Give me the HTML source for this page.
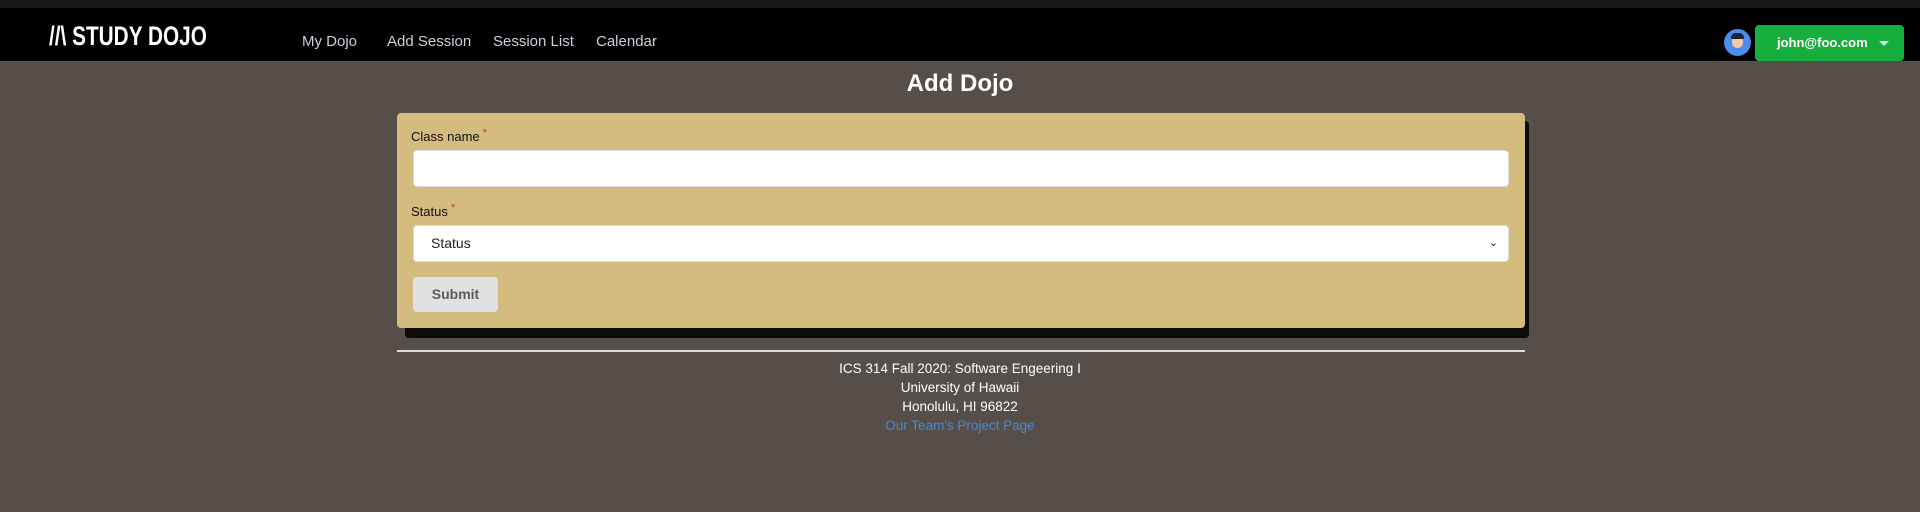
<!DOCTYPE html>
<html><head><meta charset="utf-8"><style>
*{margin:0;padding:0;box-sizing:border-box}
body{width:1920px;height:512px;background:#554e49;font-family:"Liberation Sans",sans-serif;position:relative;overflow:hidden}
.top{position:absolute;left:0;top:0;width:1920px;height:8px;background:#17171b}
.nav{position:absolute;left:0;top:8px;width:1920px;height:53px;background:#000}
.logo{position:absolute;left:49px;top:13px;color:#fff;font:bold 27px "Liberation Sans Narrow","Liberation Sans",sans-serif;letter-spacing:0px;transform:scaleX(.77);transform-origin:left;white-space:nowrap}
.ni{position:absolute;top:25px;color:#c9d1dc;font-size:15px}
.av{position:absolute;left:1724px;top:21px;width:27px;height:27px;border-radius:50%;background:#4a8cf0;overflow:hidden}
.av .f{position:absolute;left:8px;top:7px;width:11px;height:12px;border-radius:45%;background:#f4c9a8}
.av .h{position:absolute;left:7px;top:4px;width:13px;height:6px;border-radius:6px 6px 2px 2px;background:#1c2333}
.btn{position:absolute;left:1755px;top:17px;width:149px;height:36px;background:#16ae3c;border-radius:4px;color:#fff;font-weight:bold;font-size:13px;line-height:36px;padding-left:22px}
.btn:after{content:"";position:absolute;left:124px;top:16px;border:5px solid transparent;border-top-color:#d8f0dc;border-bottom:0}
h1{position:absolute;left:0;width:1920px;top:70px;text-align:center;color:#fff;font-size:24px}
.sh{position:absolute;left:405px;top:121px;width:1124px;height:217px;background:#0d0b09;border-radius:4px}
.card{position:absolute;left:397px;top:113px;width:1128px;height:215px;background:#d4bb7e;border-radius:4px}
.lb{position:absolute;left:14px;font-size:13px;color:#111}
.lb b{color:#d33;font-weight:normal;font-size:11px;position:relative;top:-5px;margin-left:3px}
.in{position:absolute;left:16px;width:1096px;height:37px;background:#fff;border:1px solid #ddd;border-radius:4px;font-size:14px;line-height:35px;padding-left:17px;color:#222}
.sub{position:absolute;left:16px;top:164px;width:85px;height:35px;background:#e0e1e2;border-radius:4px;color:#5a5a5a;font-weight:bold;font-size:14px;text-align:center;line-height:35px}
hr{position:absolute;left:397px;top:350px;width:1128px;border:0;border-top:2px solid #ddd}
.ft{position:absolute;left:0;width:1920px;text-align:center;color:#fff;font-size:13.5px}
</style></head><body>
<div class="top"></div>
<div class="nav">
<div class="logo">//\ STUDY DOJO</div>
<div class="ni" style="left:302px">My Dojo</div>
<div class="ni" style="left:387px">Add Session</div>
<div class="ni" style="left:493px">Session List</div>
<div class="ni" style="left:596px">Calendar</div>
<div class="av"><div class="f"></div><div class="h"></div></div>
<div class="btn">john@foo.com</div>
</div>
<h1>Add Dojo</h1>
<div class="sh"></div>
<div class="card">
<div class="lb" style="top:16px">Class name<b>*</b></div>
<div class="in" style="top:37px"></div>
<div class="lb" style="top:91px">Status<b>*</b></div>
<div class="in" style="top:112px">Status<span style="position:absolute;right:10px;font-size:11px">&#8964;</span></div>
<div class="sub">Submit</div>
</div>
<hr>
<div class="ft" style="top:361px">ICS 314 Fall 2020: Software Engeering I</div>
<div class="ft" style="top:380px">University of Hawaii</div>
<div class="ft" style="top:399px">Honolulu, HI 96822</div>
<div class="ft" style="top:418px;color:#4a86d4">Our Team's Project Page</div>
</body></html>
